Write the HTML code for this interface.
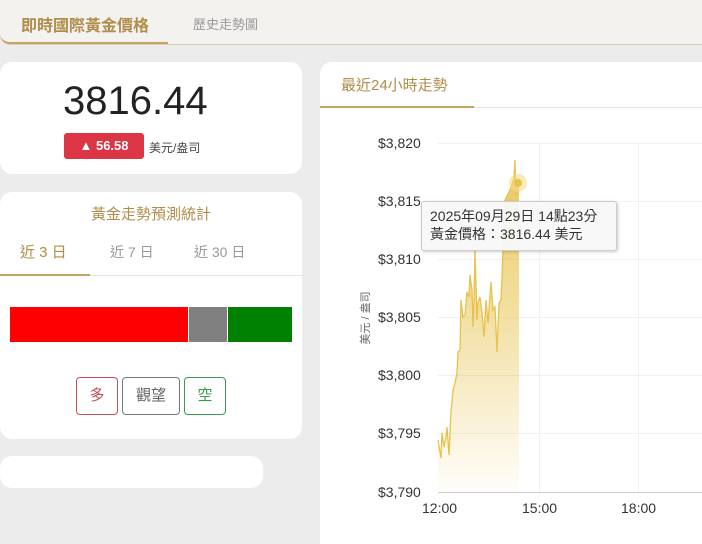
<!DOCTYPE html>
<html><head><meta charset="utf-8"><style>
*{box-sizing:border-box;margin:0;padding:0}
html,body{width:702px;height:544px;overflow:hidden}
body{background:#ececec;font-family:"Liberation Sans","Noto Sans CJK TC",sans-serif;position:relative}
.top{position:absolute;left:0;top:0;width:702px;height:45px;background:#f4f2ee;border-bottom:1px solid #dccfa6;border-radius:0 0 0 10px}
.t1{position:absolute;left:0;top:0;width:168px;height:44px;border-bottom:2px solid #c2a464;border-radius:0 0 0 10px;color:#b08d4a;font-size:16px;font-weight:bold;padding:12px 0 0 21px}
.t2{position:absolute;left:193px;top:14px;color:#999;font-size:13px}
.card{position:absolute;background:#fff;border-radius:12px}
.price{left:0;top:62px;width:302px;height:112px}
.badge{position:absolute;left:64px;top:133px;width:80px;height:26px;background:#dc3545;border-radius:3px;color:#fff;font-weight:bold;font-size:13px;text-align:center;line-height:26px}
.unit{position:absolute;left:149px;top:139px;font-size:12px;color:#444}
.stat{left:0;top:192px;width:302px;height:247px}
.h{position:absolute;top:203px;left:0;width:302px;text-align:center;color:#b08d4a;font-size:15px}
.tab{position:absolute;top:242px;font-size:14px;color:#999}
.bar{position:absolute;top:307px;height:35px}
.btn{position:absolute;top:377px;height:38px;border:1px solid;border-radius:4px;font-size:15px;text-align:center;line-height:36px}
.chart{left:320px;top:62px;width:400px;height:482px;border-radius:12px 0 0 0}
.grid{position:absolute;height:1px;background:#f0f0f0}
.yl{position:absolute;left:378px;font-size:14px;color:#333}
.xl{position:absolute;top:500px;font-size:14px;color:#333}
</style></head><body>
<div class="top"><div class="t1">即時國際黃金價格</div><div class="t2">歷史走勢圖</div></div>

<div class="card price"></div>
<div style="position:absolute;left:63px;top:79px;font-size:40px;color:#222">3816.44</div>
<div class="badge">▲ 56.58</div>
<div class="unit">美元/盎司</div>

<div class="card stat"></div>
<div class="h">黃金走勢預測統計</div>
<div class="tab" style="left:20px;color:#b08d4a;font-size:15px;top:241px">近 3 日</div>
<div class="tab" style="left:110px">近 7 日</div>
<div class="tab" style="left:194px">近 30 日</div>
<div style="position:absolute;left:0;top:275px;width:302px;height:1px;background:#e6e6e6"></div>
<div style="position:absolute;left:0;top:274px;width:90px;height:2px;background:#c2a464"></div>
<div class="bar" style="left:10px;width:178px;background:#f00"></div>
<div class="bar" style="left:189px;width:38px;background:#808080"></div>
<div class="bar" style="left:228px;width:64px;background:#008000"></div>
<div class="btn" style="left:76px;width:42px;border-color:#c0505a;color:#c0505a">多</div>
<div class="btn" style="left:122px;width:58px;border-color:#777;color:#666">觀望</div>
<div class="btn" style="left:184px;width:42px;border-color:#3a9a50;color:#3a9a50">空</div>

<div class="card" style="left:0;top:456px;width:263px;height:32px"></div>

<div class="card chart"></div>
<div style="position:absolute;left:341px;top:74px;font-size:15px;color:#b08d4a">最近24小時走勢</div>
<div style="position:absolute;left:320px;top:107px;width:382px;height:1px;background:#e6e6e6"></div>
<div style="position:absolute;left:320px;top:106px;width:154px;height:2px;background:#c2a464"></div>

<div class="grid" style="left:438px;width:264px;top:143px"></div>
<div class="grid" style="left:438px;width:264px;top:201px"></div>
<div class="grid" style="left:438px;width:264px;top:259px"></div>
<div class="grid" style="left:438px;width:264px;top:317px"></div>
<div class="grid" style="left:438px;width:264px;top:375px"></div>
<div class="grid" style="left:438px;width:264px;top:433px"></div>
<div style="position:absolute;left:438px;width:264px;top:492px;height:1px;background:#ccd"></div>
<div style="position:absolute;left:539px;top:143px;width:1px;height:349px;background:#f0f0f0"></div>
<div style="position:absolute;left:638px;top:143px;width:1px;height:349px;background:#f0f0f0"></div>

<div class="yl" style="top:135px">$3,820</div>
<div class="yl" style="top:193px">$3,815</div>
<div class="yl" style="top:251px">$3,810</div>
<div class="yl" style="top:309px">$3,805</div>
<div class="yl" style="top:367px">$3,800</div>
<div class="yl" style="top:425px">$3,795</div>
<div class="yl" style="top:484px">$3,790</div>
<div class="xl" style="left:422px">12:00</div>
<div class="xl" style="left:522px">15:00</div>
<div class="xl" style="left:621px">18:00</div>
<div style="position:absolute;left:336px;top:311px;transform:rotate(-90deg);font-size:11px;color:#666;width:60px;text-align:center;white-space:nowrap;line-height:14px">美元 / 盎司</div>

<svg style="position:absolute;left:0;top:0" width="702" height="544">
<defs><linearGradient id="g" x1="0" y1="0" x2="0" y2="1"><stop offset="0" stop-color="#e8c350" stop-opacity="0.95"/><stop offset="1" stop-color="#e8c350" stop-opacity="0.03"/></linearGradient></defs>
<path d="M438,440 L441,458 442,433 444,447 446,437 447,427 449,455 451,412 453,390 455,383 457,373 458,352 460,350 461,300 463,317 465,315 467,292 469,297 470,275 472,290 473,327 474,300 475,250 477,320 478,302 480,297 482,313 484,337 486,300 488,323 491,282 493,310 495,307 497,352 499,303 501,300 502,277 503,250 505,200 510,190 514,178 515,160 516,195 519,183 L519,492 L438,492 Z" fill="url(#g)"/>
<polyline fill="none" stroke="#e8c24a" stroke-width="1.3" points="438,440 441,458 442,433 444,447 446,437 447,427 449,455 451,412 453,390 455,383 457,373 458,352 460,350 461,300 463,317 465,315 467,292 469,297 470,275 472,290 473,327 474,300 475,250 477,320 478,302 480,297 482,313 484,337 486,300 488,323 491,282 493,310 495,307 497,352 499,303 501,300 502,277 503,250 505,200 510,190 514,178 515,160 516,195 519,183"/>
<circle cx="518" cy="183" r="9" fill="#f3dc8a" opacity="0.6"/>
<circle cx="518" cy="183" r="4" fill="#e8c24a"/>
</svg>
<div style="position:absolute;left:421px;top:201px;width:196px;height:50px;background:rgba(248,248,248,0.95);border:1px solid #ccc;border-radius:3px;box-shadow:1px 1px 3px rgba(0,0,0,0.2);font-size:14px;color:#333;padding:5px 0 0 8px;line-height:18px">2025年09月29日 14點23分<br>黃金價格：3816.44 美元</div>
</body></html>
